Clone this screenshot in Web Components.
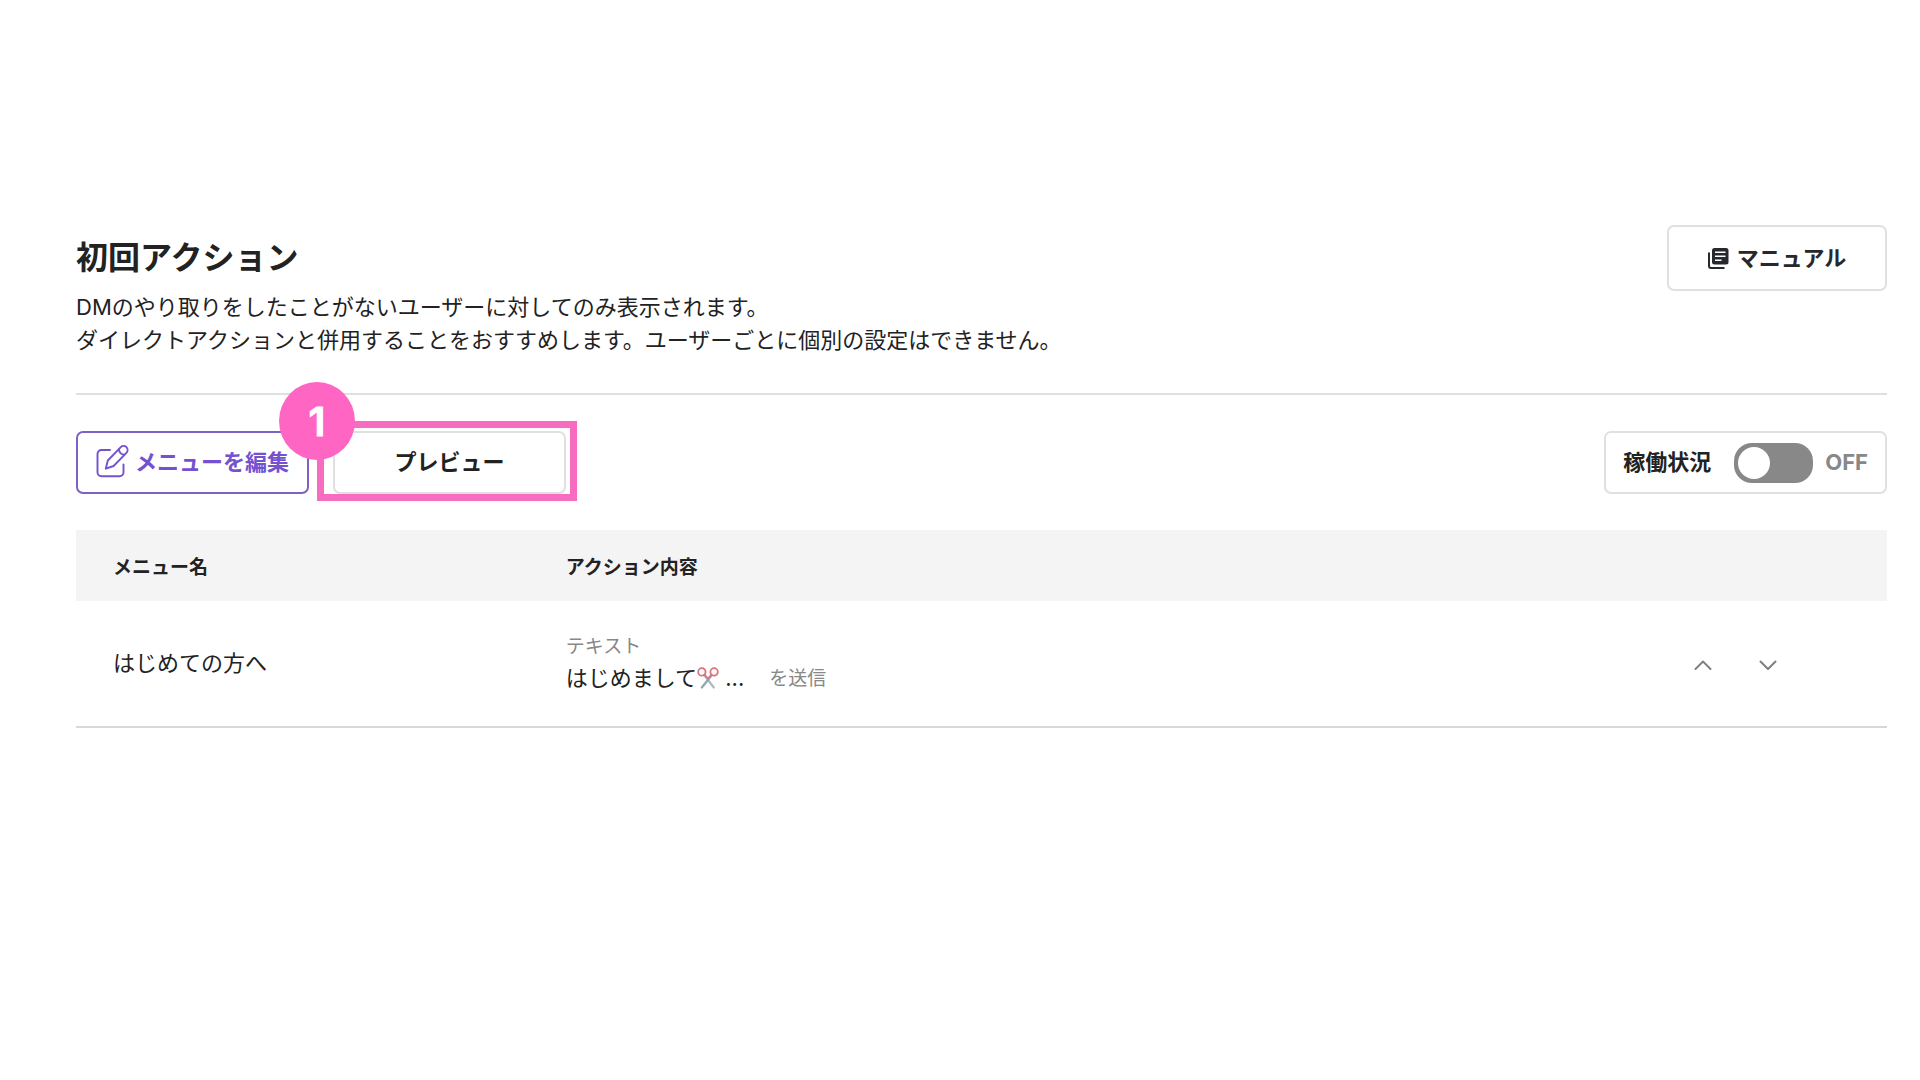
<!DOCTYPE html>
<html lang="ja">
<head>
<meta charset="utf-8">
<meta name="viewport" content="width=device-width, initial-scale=1">
<title>初回アクション</title>
<style>
    body {
        margin: 0;
        background: #fff;
        color: #222;
        font-family: Inter, "Noto Sans CJK JP", sans-serif;
        font-size: 22px;
        line-height: 33px;
    }
</style>
</head>
<body>
<first-action-page>
    <page-header>
        <span slot="title">初回アクション</span>
        <span slot="description">DMのやり取りをしたことがないユーザーに対してのみ表示されます。<br>ダイレクトアクションと併用することをおすすめします。ユーザーごとに個別の設定はできません。</span>
        <app-button slot="action" kind="manual"><app-icon slot="icon" name="manual"></app-icon>マニュアル</app-button>
    </page-header>
    <action-toolbar>
        <app-button kind="primary"><app-icon slot="icon" name="edit"></app-icon>メニューを編集</app-button>
        <step-highlight step="1">
            <app-button>プレビュー</app-button>
        </step-highlight>
        <status-switch slot="status">稼働状況</status-switch>
    </action-toolbar>
    <action-table>
        <span slot="name">はじめての方へ</span>
        <span slot="type">テキスト</span>
        <span slot="message">はじめまして<app-icon name="scissors"></app-icon> ...</span>
        <span slot="suffix">を送信</span>
    </action-table>
</first-action-page>

<script>
const icons = {
    edit: `
        <svg width="33" height="36" viewBox="0 0 33 36" fill="none" stroke="currentColor" stroke-width="1.9" stroke-linecap="round" stroke-linejoin="round">
            <path d="M14 5H5.500a4 4 0 0 0-4 4v18.300a4 4 0 0 0 4 4h18a4 4 0 0 0 4-4V19.500"/>
            <path d="M9.800 23.700l2-8.200L24.800 2.200a3.900 3.900 0 0 1 5.600 5.600L17.600 21z"/>
            <path d="M22.800 4.300c.5 3 2.300 4.900 5.500 5.500"/>
        </svg>`,
    manual: `
        <svg width="21" height="21" viewBox="0 0 21 21" fill="none">
            <path d="M1 4.500V18a2 2 0 0 0 2 2h13.500" stroke="currentColor" stroke-width="2"/>
            <path fill="currentColor" d="M6.500 0h11.500a2.500 2.500 0 0 1 2.500 2.500v11.500a2.500 2.500 0 0 1-2.500 2.500h-11.500a2.500 2.500 0 0 1-2.500-2.500v-11.500a2.500 2.500 0 0 1 2.500-2.500z"/>
            <path d="M7 4.300h10.500M7 8.300h10.500M7 12.300h6.500" stroke="#fff" stroke-width="1.500"/>
        </svg>`,
    scissors: `
        <svg width="22" height="24" viewBox="0 0 22 24" fill="none" stroke-linecap="round">
            <path d="M7.500 8.500L16.800 20.500" stroke="#a9bcc6" stroke-width="2.200"/>
            <path d="M14.500 8.500L4.800 20.500" stroke="#90a6b3" stroke-width="2.200"/>
            <circle cx="4.900" cy="4.900" r="3.700" stroke="#dc737b" stroke-width="1.800"/>
            <circle cx="17.100" cy="4.900" r="3.700" stroke="#dc737b" stroke-width="1.800"/>
            <path d="M7.500 7.600l3.500 3.900 3.500-3.900" stroke="#dc737b" stroke-width="1.700"/>
        </svg>`,
    up: `
        <svg width="18" height="18" viewBox="0 0 18 18" fill="none" stroke="currentColor" stroke-width="2" stroke-linecap="round" stroke-linejoin="round">
            <path d="M1.500 14L9 6.500l7.500 7.500"/>
        </svg>`,
    down: `
        <svg width="18" height="18" viewBox="0 0 18 18" fill="none" stroke="currentColor" stroke-width="2" stroke-linecap="round" stroke-linejoin="round">
            <path d="M1.500 6.500L9 14l7.500-7.500"/>
        </svg>`
};

class AppIcon extends HTMLElement {
    constructor() {
        super();
        this.attachShadow({mode:'open'});
    }

    connectedCallback() {
        this.shadowRoot.innerHTML = `
            <style>
                :host {
                    display: inline-block;
                    line-height: 0;
                    white-space: normal;
                }
                svg {
                    display: block;
                }
            </style>
            ${icons[this.getAttribute('name')]}
        `;
    }
}

class FirstActionPage extends HTMLElement {
    constructor() {
        super();
        this.attachShadow({mode:'open'});
        this.shadowRoot.innerHTML = `
            <style>
                :host {
                    display: block;
                    padding: 225px 33px 80px 76px;
                }
            </style>
            <main><slot></slot></main>
        `;
    }
}

class PageHeader extends HTMLElement {
    constructor() {
        super();
        this.attachShadow({mode:'open'});
        this.shadowRoot.innerHTML = `
            <style>
                :host {
                    display: block;
                }
                header {
                    display: flex;
                    justify-content: space-between;
                    align-items: flex-start;
                    padding-bottom: 36px;
                    border-bottom: 2px solid #e0e0e0;
                }
                h1 {
                    margin: 0;
                    font-size: 32px;
                    line-height: 66px;
                    font-weight: 700;
                }
                p {
                    margin: 0;
                }
            </style>
            <header>
                <div>
                    <h1><slot name="title"></slot></h1>
                    <p><slot name="description"></slot></p>
                </div>
                <slot name="action"></slot>
            </header>
        `;
    }
}

class AppButton extends HTMLElement {
    constructor() {
        super();
        this.attachShadow({mode:'open'});
        this.shadowRoot.innerHTML = `
            <style>
                :host {
                    display: block;
                    flex: none;
                    width: 233px;
                }
                :host([kind="manual"]) {
                    width: 220px;
                }
                button {
                    display: flex;
                    align-items: center;
                    justify-content: center;
                    gap: 8px;
                    width: 100%;
                    height: 63px;
                    padding: 0;
                    border: 2px solid #e0e0e0;
                    border-radius: 7px;
                    background: #fff;
                    color: #222;
                    font: inherit;
                    font-weight: 700;
                    white-space: nowrap;
                    cursor: pointer;
                }
                :host([kind="manual"]) button {
                    height: 66px;
                    color: #26282d;
                }
                :host([kind="primary"]) button {
                    gap: 6px;
                    border-color: #7c62c4;
                    color: #7451d1;
                }
            </style>
            <button type="button"><slot name="icon"></slot><span><slot></slot></span></button>
        `;
    }
}

class ActionToolbar extends HTMLElement {
    constructor() {
        super();
        this.attachShadow({mode:'open'});
        this.shadowRoot.innerHTML = `
            <style>
                :host {
                    display: flex;
                    justify-content: space-between;
                    align-items: center;
                    padding: 36px 0;
                }
                .buttons {
                    display: flex;
                    gap: 24px;
                }
            </style>
            <div class="buttons"><slot></slot></div>
            <slot name="status"></slot>
        `;
    }
}

class StepHighlight extends HTMLElement {
    constructor() {
        super();
        this.attachShadow({mode:'open'});
    }

    connectedCallback() {
        this.shadowRoot.innerHTML = `
            <style>
                :host {
                    display: block;
                    position: relative;
                }
                .frame {
                    position: absolute;
                    top: -10px;
                    right: -11px;
                    bottom: -7px;
                    left: -16px;
                    border: 7px solid #f76bc0;
                    pointer-events: none;
                }
                .badge {
                    position: absolute;
                    top: -49px;
                    left: -54px;
                    display: flex;
                    align-items: center;
                    justify-content: center;
                    width: 76px;
                    height: 78px;
                    border-radius: 50%;
                    background: #ff66c4;
                    color: #fff;
                    font-family: Inter, sans-serif;
                    font-size: 40px;
                    font-weight: 600;
                    -webkit-text-stroke: 1px #fff;
                    stroke-linejoin: round;
                }
            </style>
            <slot></slot>
            <div class="frame"></div>
            <div class="badge">${this.getAttribute('step')}</div>
        `;
    }
}

class StatusSwitch extends HTMLElement {
    constructor() {
        super();
        this.attachShadow({mode:'open'});
        this.shadowRoot.innerHTML = `
            <style>
                :host {
                    display: flex;
                    align-items: center;
                    box-sizing: border-box;
                    height: 63px;
                    padding: 0 17px;
                    border: 2px solid #e0e0e0;
                    border-radius: 7px;
                    font-weight: 700;
                }
                input {
                    appearance: none;
                    display: flex;
                    align-items: center;
                    box-sizing: border-box;
                    width: 79px;
                    height: 40px;
                    margin: 0 12px 0 23px;
                    padding: 4px;
                    border-radius: 18px;
                    background: #888;
                    cursor: pointer;
                }
                input::before {
                    content: "";
                    width: 32px;
                    height: 32px;
                    border-radius: 50%;
                    background: #fff;
                }
                input:checked {
                    justify-content: flex-end;
                    background: #7451d1;
                }
                output {
                    color: #888;
                }
            </style>
            <label for="status"><slot></slot></label>
            <input id="status" type="checkbox" role="switch">
            <output for="status">OFF</output>
        `;
    }

    connectedCallback() {
        const input = this.shadowRoot.querySelector('input');
        const output = this.shadowRoot.querySelector('output');
        input.addEventListener('change', () => {
            output.textContent = input.checked ? 'ON' : 'OFF';
        });
    }
}

class ActionTable extends HTMLElement {
    constructor() {
        super();
        this.attachShadow({mode:'open'});
        this.shadowRoot.innerHTML = `
            <style>
                :host {
                    display: block;
                }
                table {
                    width: 100%;
                    table-layout: fixed;
                    border-collapse: collapse;
                }
                th, td {
                    box-sizing: border-box;
                    padding: 0 37px;
                    text-align: left;
                }
                th {
                    height: 71px;
                    padding-top: 4px;
                    background: #f4f4f4;
                    font-size: 19px;
                    font-weight: 700;
                }
                td {
                    height: 126px;
                    border-bottom: 2px solid #d8d8d8;
                }
                .name, .order {
                    width: 25%;
                }
                .type, .suffix {
                    color: #888;
                    font-size: 19px;
                }
                .type {
                    line-height: 30px;
                }
                .message {
                    display: flex;
                    align-items: center;
                    gap: 25px;
                }
                ::slotted([slot="message"]) {
                    display: flex;
                    align-items: center;
                    white-space: pre;
                }
                .arrows {
                    display: flex;
                    justify-content: flex-end;
                    gap: 33px;
                    padding-right: 66px;
                }
                .arrows button {
                    display: flex;
                    align-items: center;
                    justify-content: center;
                    width: 32px;
                    height: 32px;
                    padding: 0;
                    border: 0;
                    background: none;
                    color: #808080;
                    cursor: pointer;
                }
            </style>
            <table>
                <thead>
                    <tr>
                        <th class="name" scope="col">メニュー名</th>
                        <th scope="col">アクション内容</th>
                        <th class="order"></th>
                    </tr>
                </thead>
                <tbody>
                    <tr>
                        <td><slot name="name"></slot></td>
                        <td>
                            <div class="type"><slot name="type"></slot></div>
                            <div class="message">
                                <slot name="message"></slot>
                                <span class="suffix"><slot name="suffix"></slot></span>
                            </div>
                        </td>
                        <td>
                            <div class="arrows">
                                <button type="button" aria-label="上へ"><app-icon name="up"></app-icon></button>
                                <button type="button" aria-label="下へ"><app-icon name="down"></app-icon></button>
                            </div>
                        </td>
                    </tr>
                </tbody>
            </table>
        `;
    }
}

window.customElements.define('app-icon', AppIcon);
window.customElements.define('app-button', AppButton);
window.customElements.define('page-header', PageHeader);
window.customElements.define('action-toolbar', ActionToolbar);
window.customElements.define('step-highlight', StepHighlight);
window.customElements.define('status-switch', StatusSwitch);
window.customElements.define('action-table', ActionTable);
window.customElements.define('first-action-page', FirstActionPage);
</script>
</body>
</html>
